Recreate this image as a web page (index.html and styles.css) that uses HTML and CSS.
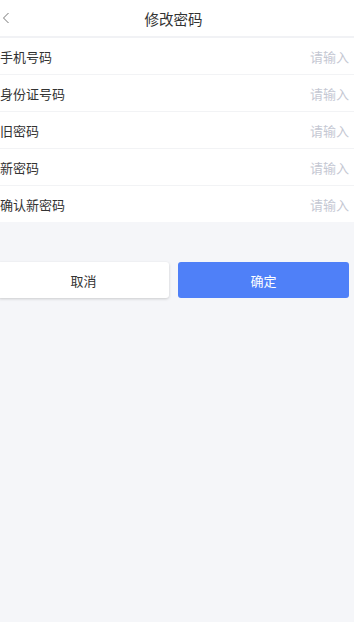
FILE: index.html
```html
<!DOCTYPE html>
<html lang="zh-CN">
<head>
<meta charset="utf-8">
<title>修改密码</title>
<link rel="stylesheet" href="styles.css">
</head>
<body>
<div class="page">
  <header class="nav">
    <span class="back">
      <svg width="8" height="12" viewBox="0 0 8 12"><polyline points="6.5,1 1.5,6 6.5,11" fill="none" stroke="#777" stroke-width="1"/></svg>
    </span>
    <h1 class="title">修改密码</h1>
  </header>
  <div class="list">
    <div class="row"><span class="label">手机号码</span><span class="ph">请输入</span></div>
    <div class="row"><span class="label">身份证号码</span><span class="ph">请输入</span></div>
    <div class="row"><span class="label">旧密码</span><span class="ph">请输入</span></div>
    <div class="row"><span class="label">新密码</span><span class="ph">请输入</span></div>
    <div class="row"><span class="label">确认新密码</span><span class="ph">请输入</span></div>
  </div>
  <div class="actions">
    <button class="btn cancel">取消</button>
    <button class="btn ok">确定</button>
  </div>
</div>
</body>
</html>
```
FILE: styles.css
```css
html, body {
  margin: 0;
  padding: 0;
  background: #f5f6f9;
  font-family: "Noto Sans CJK SC", "Noto Sans", sans-serif;
  overflow: hidden;
}
.page {
  width: 354px;
  min-height: 622px;
  background: #f5f6f9;
}
.nav {
  height: 36px;
  background: #fff;
  border-bottom: 2px solid #f1f2f5;
  display: flex;
  align-items: center;
  justify-content: center;
  position: relative;
}
.back {
  position: absolute;
  left: 2px;
  top: 12px;
  display: flex;
}
.title {
  margin: 0 7px 0 0;
  font-size: 14.5px;
  font-weight: 400;
  color: #333;
}
.list {
  background: #fff;
}
.row {
  height: 36px;
  display: flex;
  align-items: center;
  justify-content: space-between;
  padding-right: 5px;
  border-bottom: 1px solid #f2f3f5;
}
.row:last-child {
  border-bottom: none;
}
.label {
  font-size: 13px;
  color: #333;
}
.ph {
  font-size: 13px;
  color: #c5c8d3;
}
.actions {
  display: flex;
  gap: 9px;
  margin: 40px 0 0 -2px;
  padding-right: 5px;
}
.btn {
  flex: 1;
  height: 36px;
  border: none;
  border-radius: 3px;
  font-family: inherit;
  font-size: 13px;
}
.cancel {
  background: #fff;
  color: #333;
  box-shadow: 0 1px 3px rgba(0,0,0,0.18);
}
.ok {
  background: #4f80f8;
  color: #fff;
}
```
